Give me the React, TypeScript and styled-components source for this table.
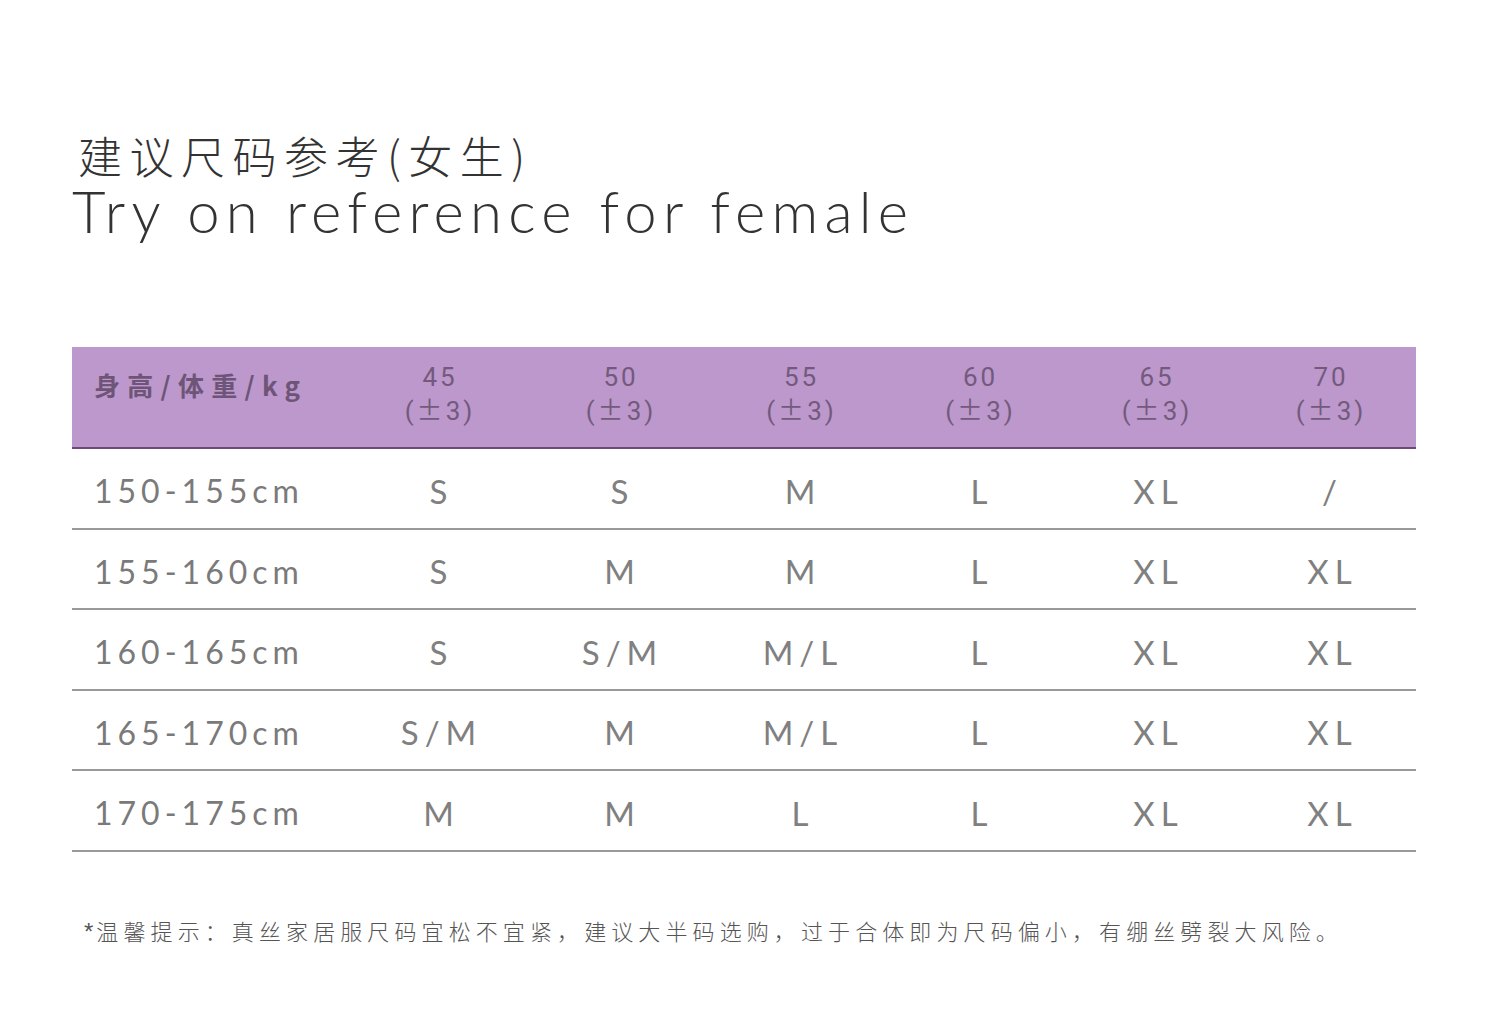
import React from "react";
import styled, { createGlobalStyle } from "styled-components";

const weights = ["45", "50", "55", "60", "65", "70"];

const rows = [
  { height: "150-155cm", sizes: ["S", "S", "M", "L", "XL", "/"] },
  { height: "155-160cm", sizes: ["S", "M", "M", "L", "XL", "XL"] },
  { height: "160-165cm", sizes: ["S", "S/M", "M/L", "L", "XL", "XL"] },
  { height: "165-170cm", sizes: ["S/M", "M", "M/L", "L", "XL", "XL"] },
  { height: "170-175cm", sizes: ["M", "M", "L", "L", "XL", "XL"] },
];

export default function App() {
  return (
    <>
      <GlobalStyle />
      <Page>
        <TitleBlock>
          <TitleCn>建议尺码参考(女生)</TitleCn>
          <TitleEn>Try on reference for female</TitleEn>
        </TitleBlock>
        <Table>
          <HeadRow>
            <HeadLabel>身高/体重/kg</HeadLabel>
            {weights.map((w) => (
              <HeadCell key={w}>
                <span>{w}</span>
                <span>
                  (<Pm>±</Pm>3)
                </span>
              </HeadCell>
            ))}
          </HeadRow>
          {rows.map((r) => (
            <Row key={r.height}>
              <RowLabel>{r.height}</RowLabel>
              {r.sizes.map((s, i) => (
                <SizeCell key={i}>{s}</SizeCell>
              ))}
            </Row>
          ))}
        </Table>
        <Note>
          <Star>*</Star>温馨提示：真丝家居服尺码宜松不宜紧，建议大半码选购，过于合体即为尺码偏小，有绷丝劈裂大风险。
        </Note>
      </Page>
    </>
  );
}

const GlobalStyle = createGlobalStyle`
  body {
    margin: 0;
    background: #fff;
  }
`;

const Page = styled.div`
  width: 1500px;
  height: 1031px;
  box-sizing: border-box;
  padding: 129px 84px 0 72px;
  background: #fff;
  font-family: "Noto Sans CJK SC", sans-serif;
`;

const TitleBlock = styled.div`
  display: flex;
  flex-direction: column;
  margin-bottom: 106px;
`;

const TitleCn = styled.div`
  font-family: "Noto Sans CJK SC", sans-serif;
  font-weight: 300;
  font-size: 44px;
  line-height: 52px;
  letter-spacing: 7.5px;
  color: #333;
  padding-left: 6px;
`;

const TitleEn = styled.div`
  font-family: Lato, "Noto Sans", sans-serif;
  font-weight: 300;
  font-size: 58px;
  line-height: 60px;
  letter-spacing: 6.2px;
  color: #333;
`;

const Table = styled.div`
  display: flex;
  flex-direction: column;
  width: 1344px;
`;

const columns = "276px 181px 181px 180px 178px 175px 173px";

const HeadRow = styled.div`
  display: grid;
  grid-template-columns: ${columns};
  height: 100px;
  background: #bc98cc;
  border-bottom: 2px solid #6b4b73;
`;

const HeadLabel = styled.div`
  padding: 19px 0 0 22px;
  font-family: "Noto Sans CJK SC", sans-serif;
  font-weight: 700;
  font-size: 26px;
  letter-spacing: 7.3px;
  color: #6e5577;
`;

const HeadCell = styled.div`
  display: flex;
  flex-direction: column;
  align-items: center;
  padding-top: 14px;
  padding-left: 3px;
  font-family: Roboto, "Liberation Sans", sans-serif;
  font-size: 26px;
  line-height: 32px;
  letter-spacing: 3px;
  color: #735a7c;
`;

const Pm = styled.span`
  font-family: "Noto Sans CJK SC", sans-serif;
`;

const Row = styled.div`
  display: grid;
  grid-template-columns: ${columns};
  align-items: center;
  height: 78.5px;
  border-bottom: 2px solid #999;
`;

const RowLabel = styled.div`
  padding: 5px 0 0 22px;
  font-family: Lato, "Noto Sans", sans-serif;
  font-size: 32px;
  letter-spacing: 5px;
  color: #7a7a7a;
`;

const SizeCell = styled.div`
  padding: 5px 0 0 6px;
  text-align: center;
  font-family: Lato, "Noto Sans", sans-serif;
  font-size: 33px;
  letter-spacing: 6px;
  color: #808080;
`;

const Note = styled.div`
  margin-top: 62px;
  padding-left: 12px;
  font-family: "Noto Sans CJK SC", sans-serif;
  font-weight: 300;
  font-size: 22px;
  letter-spacing: 5.1px;
  color: #555;
`;

const Star = styled.span`
  font-family: "Liberation Sans", sans-serif;
  font-size: 24px;
  letter-spacing: 3px;
`;
